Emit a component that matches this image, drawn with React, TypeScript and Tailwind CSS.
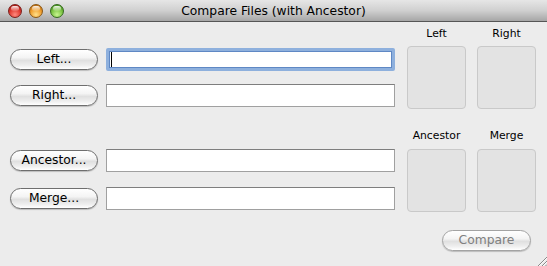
import React from 'react';

const font = { fontFamily: '"DejaVu Sans", "Liberation Sans", sans-serif' };

const AquaButton = ({ label, disabled = false }: { label: string; disabled?: boolean }) => (
  <button
    className={`h-[21px] rounded-full border bg-[linear-gradient(to_bottom,#ffffff_0%,#f4f4f4_40%,#e0e0e0_55%,#eeeeee_80%,#ffffff_100%)] shadow-[0_1px_1px_rgba(0,0,0,0.2)] text-[12.3px] leading-none ${
      disabled ? 'w-[89px] text-[#7f7f7f] border-[#a3a3a3]' : 'w-[88px] text-black border-[#6e6e6e]'
    }`}
  >
    {label}
  </button>
);

const Field = ({ focused = false }: { focused?: boolean }) => (
  <div
    className={`ml-[8px] w-[289px] h-[23px] bg-white flex items-center ${
      focused
        ? 'border-[3px] border-[#8eb0dd] shadow-[inset_0_0_0_1px_#5f88c4] rounded-[2px]'
        : 'border border-[#a0a0a0] border-t-[#7e7e7e]'
    }`}
  >
    {focused && <div className="ml-[2px] w-px h-[15px] bg-black" />}
  </div>
);

const Row = ({ label, focused, className = '' }: { label: string; focused?: boolean; className?: string }) => (
  <div className={`flex items-center h-[23px] ${className}`}>
    <AquaButton label={label} />
    <Field focused={focused} />
  </div>
);

const Light = ({ color }: { color: string }) => (
  <div className={`relative w-[14px] h-[14px] rounded-full border ${color}`}>
    <div className="absolute left-[2px] top-[1px] w-[8px] h-[5px] rounded-full bg-[linear-gradient(to_bottom,rgba(255,255,255,0.9),rgba(255,255,255,0.1))]" />
  </div>
);

const Well = () => (
  <div className="w-[59px] h-[63px] rounded-[4px] bg-[#e3e3e3] border border-[#c9c9c9]" />
);

const Label = ({ text }: { text: string }) => (
  <div className="w-[59px] text-center text-[10.8px] leading-[13px] text-black">{text}</div>
);

export default function App() {
  return (
    <div style={font} className="relative w-[547px] h-[266px] bg-[#ececec] flex flex-col overflow-hidden">
      <div className="relative h-[22px] shrink-0 border-b border-[#565656] bg-[linear-gradient(to_bottom,#e6e6e6_0%,#d0d0d0_50%,#a6a6a6_100%)] flex items-center">
        <div className="flex items-center gap-[7px] pl-[8px]">
          <Light color="border-[#7a1f1b] bg-[radial-gradient(circle_at_50%_80%,#ff8a7e_0%,#df3a30_50%,#9a0f0c_100%)]" />
          <Light color="border-[#8a5714] bg-[radial-gradient(circle_at_50%_80%,#ffe08a_0%,#f0a030_50%,#a95a08_100%)]" />
          <Light color="border-[#356a1e] bg-[radial-gradient(circle_at_50%_80%,#c8f590_0%,#7cc444_50%,#347f14_100%)]" />
        </div>
        <div className="absolute inset-0 flex items-center justify-center text-[12.3px] text-black pt-px">
          Compare Files (with Ancestor)
        </div>
      </div>

      <div className="flex h-[208px] shrink-0">
        <div className="pl-[10px] pt-[26px] flex flex-col">
          <Row label="Left..." focused />
          <Row label="Right..." className="mt-[13px]" />
          <Row label="Ancestor..." className="mt-[42px]" />
          <Row label="Merge..." className="mt-[15px]" />
        </div>

        <div className="ml-[12px] pt-[5px] flex flex-col">
          <div className="flex gap-[11px]">
            <Label text="Left" />
            <Label text="Right" />
          </div>
          <div className="flex gap-[11px] mt-[6px]">
            <Well />
            <Well />
          </div>
          <div className="flex gap-[11px] mt-[20px]">
            <Label text="Ancestor" />
            <Label text="Merge" />
          </div>
          <div className="flex gap-[11px] mt-[7px]">
            <Well />
            <Well />
          </div>
        </div>
      </div>

      <div className="flex justify-end pr-[16px]">
        <AquaButton label="Compare" disabled />
      </div>

      <svg className="absolute right-0 bottom-0" width="12" height="12" viewBox="0 0 12 12">
        <path d="M3 12 L12 3 M7 12 L12 7 M10.5 12 L12 10.5" stroke="#8a8a8a" strokeWidth="1" />
        <path d="M4 12 L12 4 M8 12 L12 8" stroke="#ffffff" strokeWidth="0.8" />
      </svg>
    </div>
  );
}
